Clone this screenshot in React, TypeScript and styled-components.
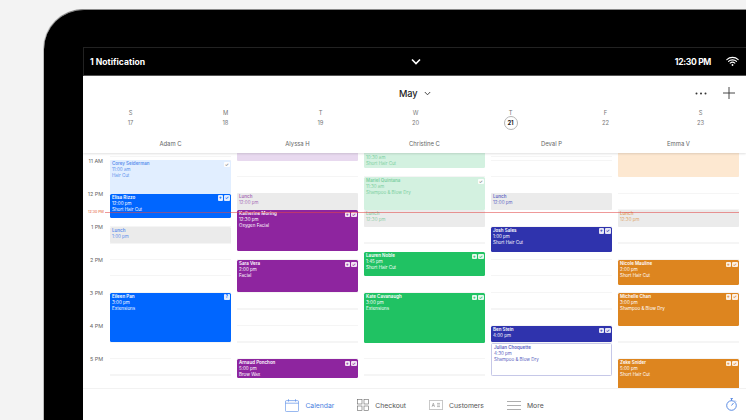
import React from "react";
import styled, { createGlobalStyle } from "styled-components";

const Global = createGlobalStyle`
  html, body { margin: 0; padding: 0; background: #f2f2f2; }
  * { box-sizing: border-box; }
`;

const Page = styled.div`
  width: 746px; height: 420px; overflow: hidden; background: #f3f3f3;
  padding: 9px 0 0 44px;
  font-family: Inter, "Liberation Sans", sans-serif;
  -webkit-font-smoothing: antialiased;
`;
const Device = styled.div`
  width: 702px; height: 411px; background: #000;
  border-radius: 40px 0 0 0;
  border-top: 1px solid #8a8a8a;
  box-shadow: -1px 0 0 #bbb;
  padding: 37px 0 0 39px;
`;
const Screen = styled.div`
  width: 663px; height: 373px; display: flex; flex-direction: column; background: #fff;
`;
const StatusBar = styled.div`
  height: 29px; flex: none; display: flex; align-items: center; justify-content: space-between;
  background: #000; color: #fff; border-top: 1px solid #222; border-left: 1px solid #222;
  padding: 0 7px 0 6px; font-size: 8.6px; font-weight: 700; position: relative;
  border-bottom: 1px solid #555;
`;
const StatusRight = styled.div`display: flex; align-items: center; gap: 15px; letter-spacing: -.35px;`;
const StatusChevron = styled.svg`width: 10px; height: 7px; position: absolute; left: 327px; top: 10px;`;

const Header = styled.header`
  height: 77px; flex: none; position: relative; z-index: 3; background: #fff;
  box-shadow: 0 1px 2px rgba(0,0,0,.12);
  display: flex; flex-direction: column;
`;
const TitleRow = styled.div`
  height: 32px; display: grid; grid-template-columns: 1fr auto 1fr; align-items: center; padding: 2px 11px 0 12px;
`;
const Month = styled.div`
  grid-column: 2; display: flex; align-items: center; gap: 6.5px;
  font-size: 9.2px; font-weight: 500; color: #222;
`;
const TitleActions = styled.div`display: flex; justify-content: flex-end; align-items: center; gap: 16px;`;
const Days = styled.div`display: grid; grid-template-columns: repeat(7, 95px); height: 29px;`;
const Day = styled.div`
  display: flex; flex-direction: column; align-items: center;
  font-size: 5.8px; color: #777; line-height: 10px;
`;
const DayNum = styled.span<{ $today?: boolean }>`
  width: 14px; height: 14px; margin-top: -2px; border-radius: 50%; display: flex; align-items: center; justify-content: center;
  border: 1px solid ${p => (p.$today ? "#b5b5b5" : "transparent")};
  font-weight: ${p => (p.$today ? 700 : 400)}; color: ${p => (p.$today ? "#222" : "#777")};
`;
const Staff = styled.div`display: grid; grid-template-columns: repeat(5, 127px); padding-left: 24px;`;
const StaffName = styled.div`text-align: center; font-size: 5.9px; color: #666; line-height: 14px;`;

const Body = styled.div`
  flex: 1; position: relative; display: flex; overflow: hidden; background: #fff;
`;
const Times = styled.div`width: 27px; flex: none; position: relative;`;
const TimeLabel = styled.div<{ $top: number }>`
  position: absolute; top: ${p => p.$top}px; right: 7px; font-size: 5.4px; line-height: 7px; color: #666; white-space: nowrap;
`;
const Columns = styled.div`flex: 1; display: grid; grid-template-columns: repeat(5, 120.5px); column-gap: 6.5px;`;
const Column = styled.div`
  position: relative; height: 235px;
  background-image: repeating-linear-gradient(to bottom, #f5f5f5 0, #f5f5f5 1px, transparent 1px, transparent 16.5px);
  background-position: 0 7px;
`;
const Event = styled.div<{ $top: number; $h: number; $bg: string; $fg: string; $bd?: string }>`
  position: absolute; left: 0; right: 0; top: ${p => p.$top}px; height: ${p => p.$h}px;
  background: ${p => p.$bg}; color: ${p => p.$fg};
  border: ${p => (p.$bd ? `1px solid ${p.$bd}` : "none")};
  border-radius: 1.5px; padding: 1px 2px; font-size: 4.5px; line-height: 6px; overflow: hidden; white-space: nowrap;
`;
const EventName = styled.div`font-weight: 600;`;
const Badges = styled.div`position: absolute; top: 1.5px; right: 1px; display: flex; gap: 1px;`;
const Badge = styled.span<{ $fg: string }>`
  width: 5.5px; height: 5.5px; border-radius: 1px; background: rgba(255,255,255,.88); color: ${p => p.$fg};
  font-size: 4.5px; line-height: 5.5px; text-align: center; font-weight: 700;
`;
const NowLabel = styled.div`
  position: absolute; left: 5px; top: 56.5px; font-size: 3.6px; line-height: 5px; color: #e4572e; z-index: 2;
`;
const NowLine = styled.div`
  position: absolute; left: 22px; right: 7px; top: 58.5px; height: 1px; background: rgba(226,70,70,.55); z-index: 2;
`;

const Footer = styled.footer`
  height: 32px; flex: none; display: grid; grid-template-columns: 1fr auto 1fr; align-items: center;
  background: #fff; border-top: 1px solid #f2f2f2; padding: 0 9px;
`;
const Nav = styled.nav`grid-column: 2; display: flex; align-items: center; gap: 23px;`;
const NavItem = styled.div<{ $active?: boolean }>`
  display: flex; align-items: center; gap: 6px; font-size: 6.8px; font-weight: 400; padding-top: 1px;
  color: ${p => (p.$active ? "#4a7fe0" : "#555")};
`;
const TimerSlot = styled.div`grid-column: 3; display: flex; justify-content: flex-end;`;

type Ev = { top: number; h: number; name?: string; time?: string; svc?: string; bg: string; fg: string; bd?: string; badges?: string };
const blue = "#0066ff", purple = "#8e259f", green = "#20c263", navy = "#2f33ad", orange = "#dd851f";
const ev = (top: number, bottom: number, bg: string, fg: string, name?: string, time?: string, svc?: string, badges?: string, bd?: string): Ev =>
  ({ top: top - 153, h: bottom - top, bg, fg, name, time, svc, badges, bd });
const gray = "#ebebeb";

const columns: Ev[][] = [
  [
    ev(160, 193.5, "#e1eeff", "#5a8eec", "Corey Seiderman", "11:00 am", "Hair Cut", "c"),
    ev(193.5, 217.5, blue, "#fff", "Elisa Rizzo", "12:00 pm", "Short Hair Cut", "pc"),
    ev(226.5, 243, gray, "#5a8eec", "Lunch", "1:00 pm"),
    ev(292.5, 342, blue, "#fff", "Eileen Pan", "3:00 pm", "Extensions", "q"),
  ],
  [
    ev(150, 160.5, "#e8d9ef", "#8e259f"),
    ev(193, 210, gray, "#a66bb5", "Lunch", "12:00 pm"),
    ev(210, 251, purple, "#fff", "Katherine Moring", "12:30 pm", "Oxygen Facial", "pc"),
    ev(260, 292, purple, "#fff", "Sara Vera", "2:00 pm", "Facial", "pc"),
    ev(359, 378, purple, "#fff", "Arnaud Ponchon", "5:00 pm", "Brow Wax", "pc"),
  ],
  [
    ev(147.5, 168, "#d3f1e0", "#7ccf9f", "", "10:30 am", "Short Hair Cut"),
    ev(177, 209.5, "#d3f1e0", "#7ccf9f", "Mariel Quintana", "11:30 am", "Shampoo & Blow Dry", "c"),
    ev(210, 226.5, gray, "#8ccda6", "Lunch", "12:30 pm"),
    ev(252, 276, green, "#fff", "Lauren Noble", "1:45 pm", "Short Hair Cut", "pc"),
    ev(293, 342.5, green, "#fff", "Kate Cavanaugh", "3:00 pm", "Extensions", "pc"),
  ],
  [
    ev(193, 209.5, gray, "#6268c4", "Lunch", "12:00 pm"),
    ev(226.5, 252, navy, "#fff", "Josh Sales", "1:00 pm", "Short Hair Cut", "pc"),
    ev(326, 342, navy, "#fff", "Ben Stein", "4:00 pm", undefined, "pc"),
    ev(342.5, 375.5, "#fff", "#5a60c0", "Julian Choquette", "4:30 pm", "Shampoo & Blow Dry", undefined, "#c6c8e8"),
  ],
  [
    ev(150, 176.5, "#fde8d1", "#dd851f"),
    ev(210, 226.5, gray, "#e0a76a", "Lunch", "12:30 pm"),
    ev(260, 284.5, orange, "#fff", "Nicole Mauline", "2:00 pm", "Short Hair Cut", "pc"),
    ev(292.5, 325.5, orange, "#fff", "Michelle Chan", "3:00 pm", "Shampoo & Blow Dry", "pc"),
    ev(359, 395, orange, "#fff", "Zeke Snider", "5:00 pm", "Short Hair Cut", "pc"),
  ],
];

const days = [["S", "17"], ["M", "18"], ["T", "19"], ["W", "20"], ["T", "21"], ["F", "22"], ["S", "23"]];
const staff = ["Adam C", "Alyssa H", "Christine C", "Deval P", "Emma V"];
const hours = ["11 AM", "12 PM", "1 PM", "2 PM", "3 PM", "4 PM", "5 PM"];

const App = () => (
  <Page>
    <Global />
    <Device>
      <Screen>
        <StatusBar>
          <span>1 Notification</span>
          <StatusChevron viewBox="0 0 10 7"><path d="M1 1.5 5 5.5 9 1.5" fill="none" stroke="#fff" strokeWidth="1.6" /></StatusChevron>
          <StatusRight>
            <span>12:30 PM</span>
            <svg width="13" height="11" viewBox="0 0 13 11" fill="none" stroke="#fff" strokeWidth="1.1" strokeLinecap="round">
              <path d="M.8 3.6C4 .6 9 .6 12.2 3.6" /><path d="M2.5 5.4C4.7 3.4 8.3 3.4 10.5 5.4" /><path d="M4.2 7.1C5.5 6 7.5 6 8.8 7.1" />
              <circle cx="6.5" cy="9" r=".9" fill="#fff" stroke="none" />
            </svg>
          </StatusRight>
        </StatusBar>
        <Header>
          <TitleRow>
            <Month>
              May
              <svg width="7" height="5" viewBox="0 0 7 5"><path d="M.8 1 3.5 3.8 6.2 1" fill="none" stroke="#333" strokeWidth=".9" /></svg>
            </Month>
            <TitleActions>
              <svg width="12" height="3" viewBox="0 0 12 3" fill="#333"><circle cx="1.5" cy="1.5" r="1" /><circle cx="6" cy="1.5" r="1" /><circle cx="10.5" cy="1.5" r="1" /></svg>
              <svg width="12" height="12" viewBox="0 0 12 12" stroke="#333" strokeWidth=".9"><path d="M6 0v12M0 6h12" /></svg>
            </TitleActions>
          </TitleRow>
          <Days>
            {days.map(([l, n]) => (
              <Day key={n}>
                <span>{l}</span>
                <DayNum $today={n === "21"}>{n}</DayNum>
              </Day>
            ))}
          </Days>
          <Staff>{staff.map(s => <StaffName key={s}>{s}</StaffName>)}</Staff>
        </Header>
        <Body>
          <Times>
            {hours.map((h, i) => <TimeLabel key={h} $top={5 + i * 33}>{h}</TimeLabel>)}
          </Times>
          <NowLabel>12:30 PM</NowLabel>
          <NowLine />
          <Columns>
            {columns.map((c, i) => (
              <Column key={i}>
                {c.map((e, j) => (
                  <Event key={j} $top={e.top} $h={e.h} $bg={e.bg} $fg={e.fg} $bd={e.bd}>
                    {e.name !== undefined && <EventName>{e.name || "\u00a0"}</EventName>}
                    {e.time && <div>{e.time}</div>}
                    {e.svc && <div>{e.svc}</div>}
                    {e.badges && (
                      <Badges>
                        {e.badges.split("").map((b, k) => (
                          <Badge key={k} $fg={e.bg === "#fff" || e.bg.startsWith("#e1") || e.bg.startsWith("#d3") ? "#888" : e.bg}>
                            {b === "p" ? "+" : b === "q" ? "?" : "✓"}
                          </Badge>
                        ))}
                      </Badges>
                    )}
                  </Event>
                ))}
              </Column>
            ))}
          </Columns>
        </Body>
        <Footer>
          <Nav>
            <NavItem $active>
              <svg width="14" height="13" viewBox="0 0 14 13" fill="none" stroke="#5f90e8" strokeWidth=".7">
                <rect x=".4" y="1.6" width="13.2" height="11" rx="1.2" /><path d="M.4 4.2h13.2M3.5.2v2.4M10.5.2v2.4" />
              </svg>
              Calendar
            </NavItem>
            <NavItem>
              <svg width="12" height="12" viewBox="0 0 12 12" fill="none" stroke="#666" strokeWidth=".6">
                <rect x=".4" y=".4" width="4.6" height="4.6" /><rect x="7" y=".4" width="4.6" height="4.6" /><rect x=".4" y="7" width="4.6" height="4.6" /><rect x="7" y="7" width="4.6" height="4.6" />
              </svg>
              Checkout
            </NavItem>
            <NavItem>
              <svg width="14" height="10" viewBox="0 0 14 10" fill="none" stroke="#777" strokeWidth=".5">
                <rect x=".3" y=".3" width="13.4" height="9.4" rx=".8" /><path d="M3 6.8 4.3 3.2 5.6 6.8M3.5 5.6h1.6M8 3.4h3M8 5h3M8 6.6h3" />
              </svg>
              Customers
            </NavItem>
            <NavItem>
              <svg width="14" height="9" viewBox="0 0 14 9" stroke="#777" strokeWidth=".6"><path d="M0 .5h14M0 4.5h14M0 8.5h14" /></svg>
              More
            </NavItem>
          </Nav>
          <TimerSlot>
            <svg width="11" height="13" viewBox="0 0 11 13" fill="none" stroke="#4a7fe0" strokeWidth=".9">
              <circle cx="5.5" cy="7.5" r="4.8" /><path d="M4.5 .6h2.4M5.5 .6v2M5.5 7.5 7.5 5M9 2.6l.9.9" />
            </svg>
          </TimerSlot>
        </Footer>
      </Screen>
    </Device>
  </Page>
);

export default App;
